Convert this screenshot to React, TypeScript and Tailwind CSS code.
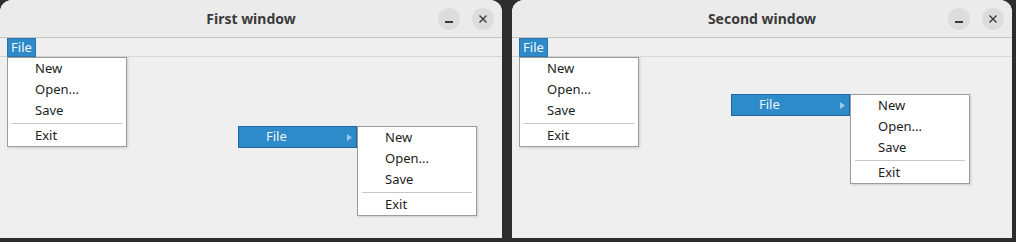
const font = { fontFamily: '"Noto Sans", "DejaVu Sans", sans-serif' };

const MenuList = () => (
  <div className="w-[120px] border border-[#9c9c9c] bg-white shadow-[1px_1px_2px_rgba(0,0,0,0.15)]">
    {['New', 'Open...', 'Save'].map((label) => (
      <div key={label} className="flex h-[21px] items-center pl-[27px] text-[13px] text-[#1c1c1c]">
        {label}
      </div>
    ))}
    <div className="flex h-[4px] items-center px-1">
      <div className="h-px w-full bg-[#c6c6c6]" />
    </div>
    <div className="flex h-[21px] items-center pl-[27px] text-[13px] text-[#1c1c1c]">Exit</div>
  </div>
);

type WindowProps = {
  title: string;
  width: string;
  popupLeft: string;
  popupTop: string;
};

const Window = ({ title, width, popupLeft, popupTop }: WindowProps) => (
  <div className={`relative flex h-[238px] flex-col overflow-hidden rounded-t-[12px] bg-[#efefef] ${width}`}>
    {/* title bar */}
    <div className="relative flex h-[38px] shrink-0 items-center justify-center border-b border-[#c4c4c4] bg-[#ebebeb]">
      <span className="text-[14px] font-bold text-[#3b3b3b]">{title}</span>
      <div className="absolute right-[8px] top-[8px] flex gap-[12px]">
        <button className="flex h-[22px] w-[22px] items-center justify-center rounded-full bg-[#dcdcdc]">
          <span className="mt-[6px] h-[1.5px] w-[8px] bg-[#3a3a3a]" />
        </button>
        <button className="flex h-[22px] w-[22px] items-center justify-center rounded-full bg-[#dcdcdc]">
          <svg width="10" height="10" viewBox="0 0 10 10">
            <path d="M1.5 1.5L8.5 8.5M8.5 1.5L1.5 8.5" stroke="#3a3a3a" strokeWidth="1.4" />
          </svg>
        </button>
      </div>
    </div>

    {/* menu bar */}
    <div className="relative flex h-[19px] shrink-0 items-start border-b border-[#d6d6d6] pl-[7px]">
      <div className="flex h-[19px] w-[29px] items-center justify-center border border-[#2a73ad] bg-[#2e8bc9] text-[13px] text-[#f2f7fb]">
        File
      </div>
      <div className="absolute left-[7px] top-[19px] z-10">
        <MenuList />
      </div>
    </div>

    {/* context popup with open submenu */}
    <div className={`absolute z-10 flex items-start ${popupLeft} ${popupTop}`}>
      <div className="flex h-[22px] w-[119px] items-center justify-between border border-[#22679f] bg-[#2e8bc9] pl-[27px] pr-[4px] text-[13px] text-[#eef4f9]">
        <span>File</span>
        <svg width="5" height="7" viewBox="0 0 5 7">
          <path d="M0 0L5 3.5L0 7Z" fill="#9fc8e6" />
        </svg>
      </div>
      <MenuList />
    </div>
  </div>
);

export default function App() {
  return (
    <div className="flex h-[242px] w-[1016px] items-start gap-[10px] bg-[#2d2d2d]" style={font}>
      <Window title="First window" width="w-[502px]" popupLeft="left-[238px]" popupTop="top-[126px]" />
      <Window title="Second window" width="w-[500px]" popupLeft="left-[219px]" popupTop="top-[94px]" />
    </div>
  );
}
